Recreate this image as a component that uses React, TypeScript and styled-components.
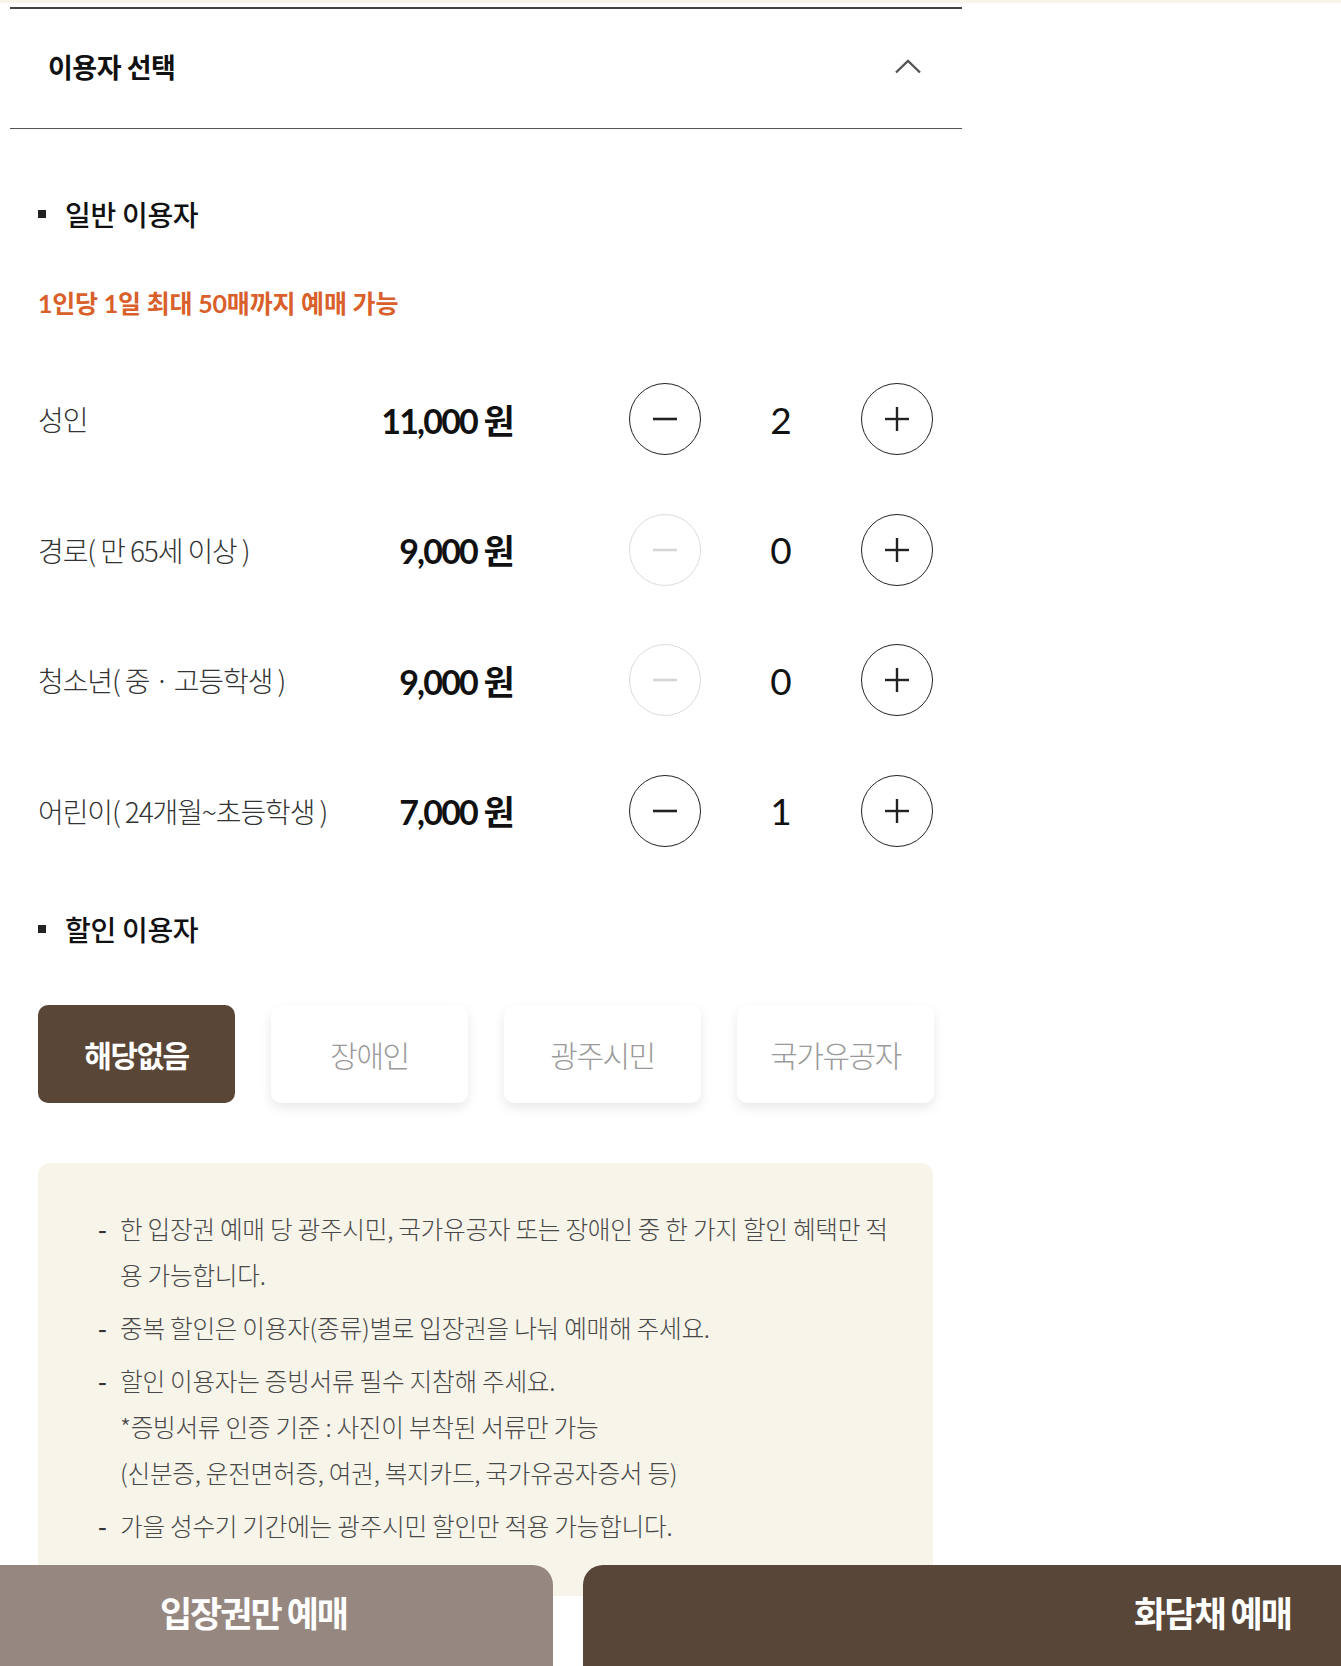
import React, { useState } from "react"
import styled, { createGlobalStyle } from "styled-components"

const GlobalStyle = createGlobalStyle`
  body {
    margin: 0;
    background: #fff;
    font-family: Lato, "Noto Sans CJK KR", sans-serif;
    color: #222;
  }
  * { box-sizing: border-box; }
`

const TopStrip = styled.div`
  height: 3px;
  background: #f7f4ea;
`

const Page = styled.div`
  padding: 4px 0 0 10px;
`

const Panel = styled.div`
  width: 952px;
  border-top: 2px solid #444;
`

const Header = styled.div`
  display: flex;
  align-items: center;
  justify-content: space-between;
  height: 120px;
  padding: 0 40px 4px 38px;
  border-bottom: 1px solid #555;
  h2 {
    margin: 0;
    font-family: "Noto Sans CJK KR", sans-serif;
    font-size: 27px;
    font-weight: 700;
    color: #111;
    letter-spacing: -0.5px;
  }
`

const Body = styled.div`
  padding: 69px 29px 0 28px;
`

const SectionTitle = styled.h3`
  display: flex;
  align-items: center;
  gap: 19px;
  margin: 0;
  height: 32px;
  font-family: "Noto Sans CJK KR", sans-serif;
  font-size: 28px;
  font-weight: 500;
  color: #111;
  letter-spacing: -0.3px;
  &::before {
    content: "";
    width: 8px;
    height: 8px;
    background: #222;
  }
`

const Limit = styled.p`
  margin: 58px 0 0;
  height: 30px;
  line-height: 30px;
  font-size: 25px;
  font-weight: 700;
  color: #d9602a;
  letter-spacing: -0.2px;
`

const Rows = styled.div`
  display: flex;
  flex-direction: column;
  gap: 58.5px;
  margin: 65px 0 0;
`

const Row = styled.div`
  display: flex;
  align-items: center;
  height: 72px;
`

const Label = styled.div`
  width: 300px;
  font-family: "Noto Sans CJK KR", sans-serif;
  font-size: 28px;
  font-weight: 300;
  color: #333;
  letter-spacing: -1.1px;
`

const Price = styled.div`
  width: 175px;
  text-align: right;
  font-size: 34px;
  font-weight: 700;
  color: #111;
  letter-spacing: -1.8px;
`

const Stepper = styled.div`
  display: flex;
  align-items: center;
  margin-left: 116px;
`

const CircleButton = styled.button<{ $disabled?: boolean }>`
  display: flex;
  align-items: center;
  justify-content: center;
  width: 72px;
  height: 72px;
  padding: 0;
  border-radius: 50%;
  background: #fff;
  border: 1px solid ${({ $disabled }) => ($disabled ? "#dcdcdc" : "#222")};
  color: ${({ $disabled }) => ($disabled ? "#d6d6d6" : "#222")};
  cursor: ${({ $disabled }) => ($disabled ? "default" : "pointer")};
`

const Count = styled.div`
  width: 160px;
  text-align: center;
  font-size: 37px;
  font-weight: 400;
  color: #111;
`

const DiscountTitle = styled(SectionTitle)`
  margin-top: 66px;
`

const Discounts = styled.div`
  display: grid;
  grid-template-columns: repeat(4, 197px);
  gap: 36px;
  margin-top: 60px;
`

const DiscountButton = styled.button<{ $active?: boolean }>`
  height: 98px;
  border: 0;
  border-radius: 10px;
  font-family: "Noto Sans CJK KR", sans-serif;
  font-size: 30px;
  letter-spacing: -1.5px;
  cursor: pointer;
  background: ${({ $active }) => ($active ? "#5a4637" : "#fff")};
  color: ${({ $active }) => ($active ? "#fff" : "#9a9a9a")};
  font-weight: ${({ $active }) => ($active ? 700 : 300)};
  box-shadow: ${({ $active }) => ($active ? "none" : "0 5px 12px rgba(0, 0, 0, 0.09)")};
`

const Notice = styled.ul`
  list-style: none;
  margin: 60px 0 0;
  padding: 42px 30px 48px 60px;
  background: #f7f4ea;
  border-radius: 12px 12px 0 0;
  display: flex;
  flex-direction: column;
  gap: 7px;
`

const NoticeItem = styled.li`
  display: flex;
  font-family: "Noto Sans CJK KR", sans-serif;
  font-size: 24.7px;
  font-weight: 300;
  line-height: 46px;
  color: #484848;
  letter-spacing: -0.3px;
  &::before {
    content: "-";
    flex: 0 0 22px;
    font-weight: 500;
    color: #333;
  }
`

const BottomBar = styled.div`
  position: fixed;
  left: -20px;
  right: -30px;
  bottom: -20px;
  display: flex;
  gap: 30px;
  height: 121px;
`

const BottomButton = styled.button<{ $primary?: boolean }>`
  display: flex;
  align-items: center;
  justify-content: ${({ $primary }) => ($primary ? "flex-end" : "center")};
  flex: ${({ $primary }) => ($primary ? "1" : "0 0 573px")};
  padding: ${({ $primary }) => ($primary ? "0 80px 28px 0" : "0 26px 28px 0")};
  border: 0;
  border-radius: 20px;
  background: ${({ $primary }) => ($primary ? "#584638" : "#968880")};
  color: #fff;
  font-family: "Noto Sans CJK KR", sans-serif;
  font-size: 35px;
  font-weight: 700;
  letter-spacing: -2px;
`

const ChevronUp = () => (
  <svg width="28" height="15" viewBox="0 0 28 15" fill="none">
    <polyline points="2,13.5 14,2 26,13.5" stroke="#555" strokeWidth="2.4" />
  </svg>
)

const MinusIcon = () => (
  <svg width="26" height="26" viewBox="0 0 26 26">
    <line x1="1" y1="13" x2="25" y2="13" stroke="currentColor" strokeWidth="2.6" />
  </svg>
)

const PlusIcon = () => (
  <svg width="26" height="26" viewBox="0 0 26 26">
    <line x1="1" y1="13" x2="25" y2="13" stroke="currentColor" strokeWidth="2.4" />
    <line x1="13" y1="1" x2="13" y2="25" stroke="currentColor" strokeWidth="2.4" />
  </svg>
)

const tickets = [
  { label: "성인", price: "11,000", count: 2 },
  { label: "경로( 만 65세 이상 )", price: "9,000", count: 0 },
  { label: "청소년( 중 · 고등학생 )", price: "9,000", count: 0 },
  { label: "어린이( 24개월~초등학생 )", price: "7,000", count: 1 },
]

const discounts = ["해당없음", "장애인", "광주시민", "국가유공자"]

const App = () => {
  const [counts, setCounts] = useState(tickets.map((t) => t.count))
  const [discount, setDiscount] = useState(0)

  const change = (i: number, d: number) =>
    setCounts((c) => c.map((v, j) => (j === i ? Math.max(0, Math.min(50, v + d)) : v)))

  return (
    <>
      <GlobalStyle />
      <TopStrip />
      <Page>
        <Panel>
          <Header>
            <h2>이용자 선택</h2>
            <ChevronUp />
          </Header>
          <Body>
            <SectionTitle>일반 이용자</SectionTitle>
            <Limit>1인당 1일 최대 50매까지 예매 가능</Limit>
            <Rows>
              {tickets.map((t, i) => (
                <Row key={t.label}>
                  <Label>{t.label}</Label>
                  <Price>{t.price} 원</Price>
                  <Stepper>
                    <CircleButton $disabled={counts[i] === 0} onClick={() => change(i, -1)}>
                      <MinusIcon />
                    </CircleButton>
                    <Count>{counts[i]}</Count>
                    <CircleButton onClick={() => change(i, 1)}>
                      <PlusIcon />
                    </CircleButton>
                  </Stepper>
                </Row>
              ))}
            </Rows>
            <DiscountTitle>할인 이용자</DiscountTitle>
            <Discounts>
              {discounts.map((d, i) => (
                <DiscountButton key={d} $active={discount === i} onClick={() => setDiscount(i)}>
                  {d}
                </DiscountButton>
              ))}
            </Discounts>
            <Notice>
              <NoticeItem>
                <span>한 입장권 예매 당 광주시민, 국가유공자 또는 장애인 중 한 가지 할인 혜택만 적용 가능합니다.</span>
              </NoticeItem>
              <NoticeItem>
                <span>중복 할인은 이용자(종류)별로 입장권을 나눠 예매해 주세요.</span>
              </NoticeItem>
              <NoticeItem>
                <span>
                  할인 이용자는 증빙서류 필수 지참해 주세요.
                  <br />
                  *증빙서류 인증 기준 : 사진이 부착된 서류만 가능
                  <br />
                  (신분증, 운전면허증, 여권, 복지카드, 국가유공자증서 등)
                </span>
              </NoticeItem>
              <NoticeItem>
                <span>가을 성수기 기간에는 광주시민 할인만 적용 가능합니다.</span>
              </NoticeItem>
            </Notice>
          </Body>
        </Panel>
      </Page>
      <BottomBar>
        <BottomButton>입장권만 예매</BottomButton>
        <BottomButton $primary>화담채 예매</BottomButton>
      </BottomBar>
    </>
  )
}

export default App
